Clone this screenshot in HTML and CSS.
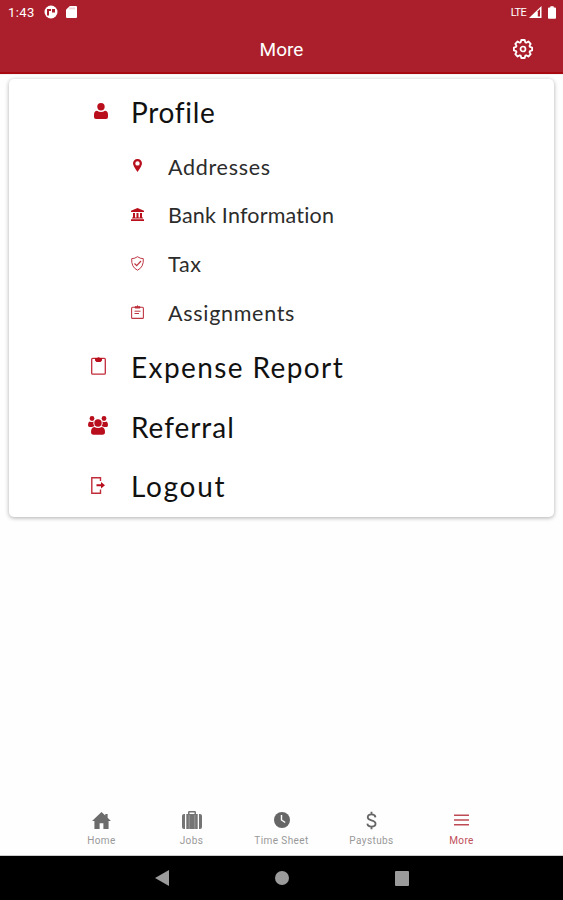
FILE: index.html
```html
<!DOCTYPE html>
<html lang="en">
<head>
    <meta charset="UTF-8">
    <meta name="viewport" content="width=device-width, initial-scale=1.0">
    <title>More</title>
    <link rel="stylesheet" href="styles.css">
</head>
<body>
    <div class="status-bar">
        <span class="time">1:43</span>
        <svg class="status-app" width="14" height="14" viewBox="0 0 14 14">
            <circle cx="7" cy="7" r="6.5" fill="#fff"/>
            <path d="M3 4h4v2H5v4.500H3zM8 4h3v3.500H8z" fill="#ab1f2d"/>
        </svg>
        <svg class="status-card" width="11" height="12" viewBox="0 0 11 12">
            <path d="M3.8 0H10q1 0 1 1v10q0 1-1 1H1q-1 0-1-1V3.8z" fill="#fff"/>
            <path d="M4 1.500v1.800M6 1.500v1.800M8 1.500v1.800" stroke="#d98f96" stroke-width=".8"/>
        </svg>
        <span class="lte">LTE</span>
        <svg class="signal" width="13" height="12" viewBox="0 0 13 12">
            <path d="M0 12L12.500 0v12z" fill="#fff"/>
            <path d="M8.800 5.200L11 3v7.500H8.800z" fill="#ab1f2d"/>
        </svg>
        <svg class="battery" width="8" height="13" viewBox="0 0 9 14">
            <path d="M2.600 0h3.800v1.500H8q1 0 1 1V13q0 1-1 1H1q-1 0-1-1V2.500q0-1 1-1h1.600z" fill="#fff"/>
        </svg>
    </div>
    <header class="app-bar">
        <h1>More</h1>
        <svg class="settings" width="20" height="20" viewBox="0 0 20 20" fill="none" stroke="#fff" stroke-linejoin="round">
            <path d="M8.300 1h3.400l.6 2.300 1 .4 2.100-1.200 2.300 2.300-1.200 2.100.4 1 2.200.6v3l-2.200.6-.4 1 1.200 2.100-2.300 2.300-2.100-1.200-1 .4-.6 2.300H8.300l-.6-2.300-1-.4-2.100 1.200-2.300-2.300 1.200-2.100-.4-1L.9 11.500v-3l2.200-.6.4-1-1.200-2.100 2.300-2.300 2.100 1.200 1-.4z" stroke-width="1.800"/>
            <circle cx="10" cy="10" r="2.500" stroke-width="1.700"/>
        </svg>
    </header>

    <main>
        <ul class="card">
            <li class="item profile">
                <span class="icon"><svg width="14" height="16" viewBox="0 0 14 16" fill="#b90e1c">
                    <circle cx="7" cy="3.800" r="3.700"/>
                    <path d="M3 7.800q4 2.500 8 0 3 .3 3 4V14q0 2-2 2H2q-2 0-2-2v-2.200q0-3.700 3-4z"/>
                </svg></span>
                <span class="label">Profile</span>
            </li>
            <li class="item sub addresses">
                <span class="icon"><svg width="9" height="13" viewBox="0 0 9 13">
                    <path d="M4.500 0A4.400 4.400 0 0 1 9 4.400Q9 6.500 4.500 13 0 6.500 0 4.400A4.400 4.400 0 0 1 4.500 0zm0 2.200a2.200 2.200 0 1 0 0 4.400 2.200 2.200 0 1 0 0-4.400z" fill="#b90e1c" fill-rule="evenodd"/>
                </svg></span>
                <span class="label">Addresses</span>
            </li>
            <li class="item sub bank">
                <span class="icon"><svg width="13" height="13" viewBox="0 0 13 13" fill="#b90e1c">
                    <path d="M6.500 0L13 2.700V4H0V2.700zM2 5h2v4.500H2zM5.500 5h2v4.500h-2zM9 5h2v4.500H9zM1 9.500h11v1H1zM0 11.300h13V13H0z"/>
                </svg></span>
                <span class="label">Bank Information</span>
            </li>
            <li class="item sub tax">
                <span class="icon"><svg width="13" height="15" viewBox="0 0 13 15" fill="none" stroke="#bf3643">
                    <path d="M6.500.7Q9 2.600 12.300 2.700q.6 8.500-5.800 11.500Q.1 11.200.7 2.700 4 2.600 6.500.7z"/>
                    <path d="M3.500 7.500l2.200 2.200L10 5" stroke-width="1.200"/>
                </svg></span>
                <span class="label">Tax</span>
            </li>
            <li class="item sub assignments">
                <span class="icon"><svg width="13" height="14" viewBox="0 0 13 14" fill="none" stroke="#bf3643">
                    <rect x=".6" y="2.200" width="11.800" height="11.200" rx="1" stroke-width="1.100"/>
                    <path d="M4 3V1.700h1.500Q6.500 0 7.500 1.700H9V3z" fill="#bf2533"/>
                    <path d="M3.500 6.200h6M3.500 8.500h4.500"/>
                </svg></span>
                <span class="label">Assignments</span>
            </li>
            <li class="item expense">
                <span class="icon"><svg width="15" height="18" viewBox="0 0 15 18" fill="none" stroke="#c22c3a">
                    <rect x=".7" y="1.300" width="13.600" height="15.900" rx="1" stroke-width="1.300"/>
                    <path d="M4 1h2Q7.500-.5 9 1h2v2.500l-1.500 1.500h-4L4 3.500z" fill="#b90e1c" stroke="none"/>
                </svg></span>
                <span class="label">Expense Report</span>
            </li>
            <li class="item referral">
                <span class="icon"><svg width="20" height="19" viewBox="0 0 20 19" fill="#b90e1c">
                    <circle cx="4" cy="2.500" r="2.400"/>
                    <circle cx="16" cy="2.500" r="2.400"/>
                    <path d="M1.500 5.500Q4 6.500 5.500 5.500q-.8 2.500 1 4.500L4 11H1.500Q0 11 0 9q0-3 1.500-3.500zM18.500 5.500q-2.500 1-4 0 .8 2.500-1 4.500l2.500 1h2.500Q20 11 20 9q0-3-1.500-3.500z"/>
                    <circle cx="10" cy="7" r="3.700"/>
                    <path d="M6.300 11q3.700 2 7.400 0 3.300.3 3.300 5 0 2.700-2.500 2.700h-9Q3 18.700 3 16q0-4.700 3.300-5z"/>
                </svg></span>
                <span class="label">Referral</span>
            </li>
            <li class="item logout">
                <span class="icon"><svg width="14" height="17" viewBox="0 0 14 17">
                    <path d="M9.500 4V.8H.8v15.400h8.700V12.500" fill="none" stroke="#c22c3a" stroke-width="1.400"/>
                    <path d="M5.500 7.200H10V5l4 3.300-4 3.200V9.300H5.500z" fill="#b90e1c"/>
                </svg></span>
                <span class="label">Logout</span>
            </li>
        </ul>
    </main>

    <nav class="tabs">
        <a class="tab home">
            <svg width="19" height="17" viewBox="0 0 20 18" fill="#6c6c6c"><path d="M10 0l4 3.700V2h2.500v4L20 9.500h-2.500V18H12v-6H8v6H2.500V9.500H0z"/></svg>
            <span>Home</span>
        </a>
        <a class="tab jobs">
            <svg width="20" height="18" viewBox="0 0 20 18" fill="#747474"><path d="M0 5q0-2 2-2h1v15H2q-2 0-2-2zM17 3h1q2 0 2 2v11q0 2-2 2h-1z"/><path d="M4.300 3H6V1.300Q6 0 7.300 0h5.400Q14 0 14 1.300V3h1.700v15H4.300zM7.500 1.400V3h5V1.400z" fill-rule="evenodd"/><path d="M7.200 4v14M12.800 4v14" stroke="#aaa" stroke-width=".7"/></svg>
            <span>Jobs</span>
        </a>
        <a class="tab time-sheet">
            <svg width="16" height="16" viewBox="0 0 16 16"><circle cx="8" cy="8" r="8" fill="#666"/><path d="M7.500 3v5l3.700 2.500" fill="none" stroke="#fff" stroke-width="1.400"/></svg>
            <span>Time Sheet</span>
        </a>
        <a class="tab paystubs">
            <svg width="11" height="19" viewBox="0 0 12 20" fill="none" stroke="#666" stroke-width="2"><path d="M10.300 6.500Q10 3.300 6 3.300 1.900 3.300 1.900 6.500q0 2.300 4.100 3.400 4.400 1.100 4.400 3.700 0 3.100-4.400 3.100-4.200 0-4.500-3.200M6 .5v3M6 16.500v3"/></svg>
            <span>Paystubs</span>
        </a>
        <a class="tab more active">
            <svg width="15" height="12" viewBox="0 0 15 12" fill="#bd4b56"><path d="M0 .5h15V2H0zM0 5.200h15v1.500H0zM0 10h15v1.500H0z"/></svg>
            <span>More</span>
        </a>
    </nav>

    <footer class="system-nav">
        <svg width="14" height="16" viewBox="0 0 14 16"><path d="M14 0v16L0 8z" fill="#9b9b9b"/></svg>
        <svg width="14" height="14" viewBox="0 0 14 14"><circle cx="7" cy="7" r="7" fill="#9b9b9b"/></svg>
        <svg width="14" height="15" viewBox="0 0 14 15"><rect width="14" height="15" rx="1" fill="#9b9b9b"/></svg>
    </footer>
</body>
</html>
```
FILE: styles.css
```css
* {
    box-sizing: border-box;
}
body {
    margin: 0;
    height: 900px;
    display: flex;
    flex-direction: column;
    background-color: #fefefe;
    font-family: Lato, "Open Sans", sans-serif;
    overflow: hidden;
}
svg {
    display: block;
    flex-shrink: 0;
}
.status-bar {
    height: 24px;
    display: flex;
    align-items: center;
    padding: 0 7px 0 8px;
    background-color: #ab1f2d;
    color: #fff;
    font-family: Roboto, sans-serif;
}
.time {
    width: 36px;
    font-size: 13px;
    font-weight: 400;
    letter-spacing: 0.4px;
}
.status-card {
    margin-left: 8px;
}
.lte {
    margin-left: auto;
    font-size: 11px;
    letter-spacing: -0.7px;
}
.signal {
    margin-left: 3px;
}
.battery {
    margin-left: 6px;
}
.app-bar {
    height: 50px;
    display: grid;
    grid-template-columns: 1fr auto 1fr;
    align-items: center;
    background-color: #ab1f2d;
    border-bottom: 2px solid #a80911;
    color: #fff;
    font-family: Roboto, sans-serif;
}
.app-bar h1 {
    grid-column: 2;
    margin: 2px 0 0;
    font-size: 19px;
    font-weight: 400;
}
.settings {
    justify-self: end;
    margin: 1px 30px 0 0;
}
main {
    flex: 1;
    padding: 4px 9px;
    border-top: 1px solid #f2f2f2;
}
.card {
    list-style: none;
    margin: 0;
    padding: 3.6px 0 0;
    height: 438px;
    background-color: #fff;
    border-radius: 5px;
    box-shadow: 0 1px 4px rgba(0, 0, 0, 0.32);
}
.item {
    height: 59.5px;
    display: flex;
    align-items: center;
    padding-left: 74px;
    color: #111;
    font-size: 28px;
    line-height: 34px;
    font-variant-ligatures: none;
}
.icon {
    width: 30px;
    margin-right: 18px;
    display: flex;
    justify-content: center;
    padding-bottom: 2px;
}
.label {
    white-space: nowrap;
}
.sub {
    height: 48.9px;
    padding-left: 113px;
    color: #2c2c2c;
    font-size: 21.5px;
    line-height: 28px;
    letter-spacing: 0.7px;
}
.sub .icon {
    margin-right: 16px;
}
.profile .icon {
    padding-left: 6px;
}
.expense .icon {
    padding-left: 1px;
}
.profile .label {
    letter-spacing: 0.7px;
}
.bank .label {
    letter-spacing: 0.2px;
}
.expense .label {
    letter-spacing: 1.4px;
}
.referral .label {
    letter-spacing: 0.95px;
}
.logout .label {
    letter-spacing: 1.7px;
}
.tabs {
    height: 56px;
    display: flex;
    justify-content: center;
    border-bottom: 1px solid #ccc;
}
.tab {
    width: 90px;
    height: 51px;
    padding-top: 5px;
    display: flex;
    flex-direction: column;
    align-items: center;
    color: #999;
    font-family: Roboto, sans-serif;
    font-size: 10px;
    line-height: 12px;
    letter-spacing: 0.4px;
}
.tab svg {
    margin: auto 0;
}
.tab span {
    margin-bottom: 4px;
}
.active {
    color: #c0505a;
}
.system-nav {
    height: 44px;
    display: flex;
    justify-content: center;
    align-items: center;
    gap: 106px;
    background-color: #000;
}
```
